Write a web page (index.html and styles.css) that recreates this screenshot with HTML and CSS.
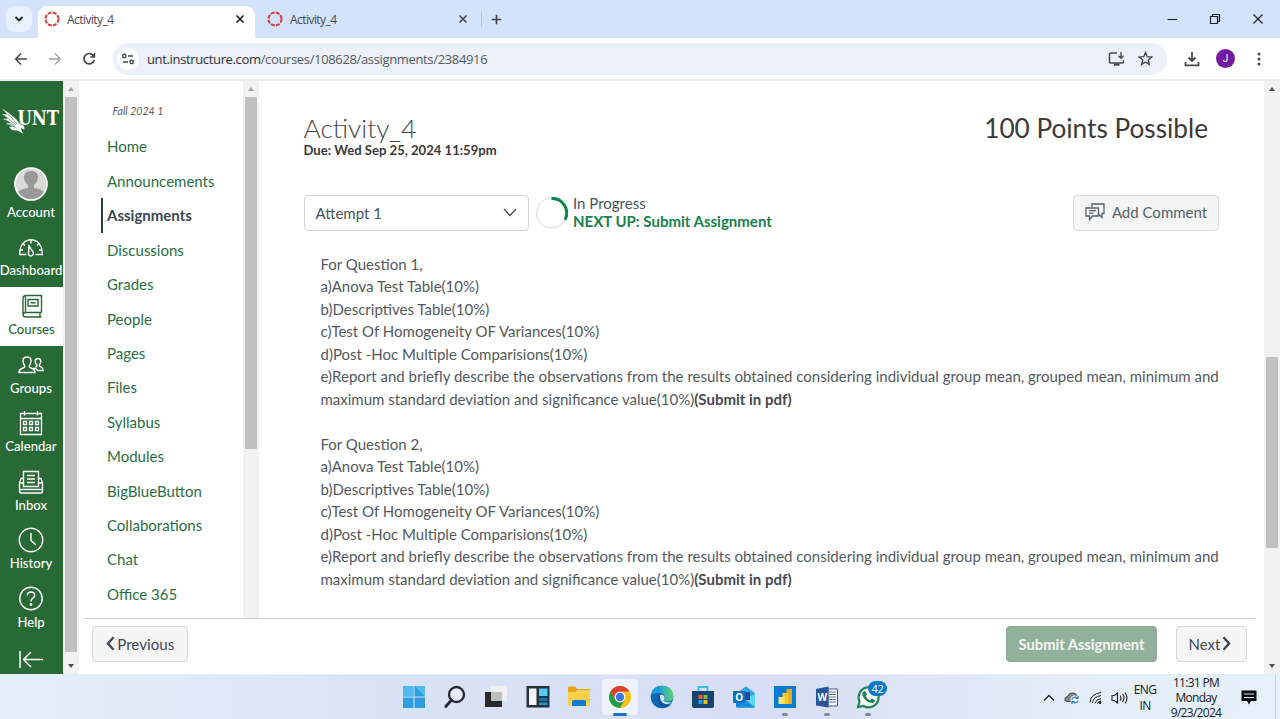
FILE: index.html
```
<!DOCTYPE html>
<html lang="en">
<head>
<meta charset="utf-8">
<title>Activity_4</title>
<link rel="stylesheet" href="styles.css">
</head>
<body>
<header class="tabs">
  <div class="tab-search"><svg width="10" height="8" viewBox="0 0 10 8" class="ln dark"><path d="M1.5 2l3.5 3.5L8.500 2" stroke-width="1.8"/></svg></div>
  <div class="tab active">
    <svg class="fav" width="16" height="16" viewBox="0 0 16 16"><circle cx="8" cy="8" r="6.500"/></svg>
    <span class="tab-title">Activity_4</span>
    <svg width="10" height="10" viewBox="0 0 10 10" class="ln dark"><path d="M1.500 1.500l7 7M8.500 1.500l-7 7" stroke-width="1.700"/></svg>
  </div>
  <div class="tab">
    <svg class="fav" width="16" height="16" viewBox="0 0 16 16"><circle cx="8" cy="8" r="6.500"/></svg>
    <span class="tab-title">Activity_4</span>
    <svg width="10" height="10" viewBox="0 0 10 10" class="ln gray"><path d="M1.500 1.500l7 7M8.500 1.500l-7 7" stroke-width="1.600"/></svg>
  </div>
  <i class="tab-sep"></i>
  <svg width="11" height="11" viewBox="0 0 11 11" class="ln gray plus"><path d="M5.500 .8v9.400M.8 5.500h9.400" stroke-width="1.700"/></svg>
  <div class="window-buttons">
    <svg width="12" height="12" viewBox="0 0 12 12" class="ln dark"><path d="M1.500 6.500h9.500" stroke-width="1.100"/></svg>
    <svg width="12" height="12" viewBox="0 0 12 12" class="ln dark"><path d="M1.500 3.500h7v7h-7zM3.500 3.500v-2h7v7h-2" stroke-width="1.200"/></svg>
    <svg width="12" height="12" viewBox="0 0 12 12" class="ln dark"><path d="M1.500 1.500l9 9M10.500 1.500l-9 9" stroke-width="1.200"/></svg>
  </div>
</header>
<section class="toolbar">
  <svg width="14" height="14" viewBox="0 0 14 14" class="ln gray"><path d="M13 7H2M7 1.500L1.700 7 7 12.500" stroke-width="1.600"/></svg>
  <svg width="14" height="14" viewBox="0 0 14 14" class="ln pale"><path d="M1 7h11M7 1.500L12.300 7 7 12.500" stroke-width="1.500"/></svg>
  <svg width="14" height="14" viewBox="0 0 14 14" class="ln gray"><path d="M11.700 4.200A5.200 5.200 0 1 0 12.200 8M12.400 1v4h-4" stroke-width="1.700"/></svg>
  <div class="address">
    <span class="site"><svg width="14" height="12" viewBox="0 0 14 12" class="ln gray"><circle cx="3.300" cy="3" r="1.700"/><path d="M7 3h5M2 9h5" /><circle cx="10.700" cy="9" r="1.700"/></svg></span>
    <span class="url"><b>unt.instructure.com</b>/courses/108628/assignments/2384916</span>
    <svg width="17" height="16" viewBox="0 0 17 16" class="ln gray"><path d="M9 2H2.500Q1.500 2 1.500 3v8q0 1 1 1h12q1 0 1-1V9.500" stroke-width="1.500"/><path d="M6 13.600h5.500" stroke-width="2.200"/><path d="M13 1v6M10.500 4.800L13 7.300l2.500-2.500" stroke-width="1.400"/></svg>
    <svg width="15" height="15" viewBox="0 0 15 15" class="ln gray"><path d="M7.500 1.500l1.700 4.200 4.500.4-3.400 2.900 1 4.400-3.800-2.400-3.800 2.400 1-4.400L1.300 6.100l4.500-.4z" stroke-width="1.400"/></svg>
  </div>
  <svg width="16" height="16" viewBox="0 0 16 16" class="ln gray"><path d="M8 1v9M4.500 6.500L8 10l3.500-3.500M1.500 11v3.300h13V11" stroke-width="1.800"/></svg>
  <span class="profile">J</span>
  <svg width="4" height="14" viewBox="0 0 4 14" class="dots"><circle cx="2" cy="2" r="1.500"/><circle cx="2" cy="7" r="1.500"/><circle cx="2" cy="12" r="1.500"/></svg>
</section>

<main class="page">
  <nav class="global">
    <svg class="logo" width="62" height="28" viewBox="0 0 62 28">
      <path d="M2 1.500Q10 6 16 12L18.500 15.500 24 18.500 24.500 22.500 20.500 21 23 26.500 17 23.500 12 23 9 20 13 19.500 6 16.500 10.500 15.500 3 12 8 11.500 2 7 7 7.500z" fill="#fff"/>
      <path d="M4 4Q11 9 17 17M4 8l12 10M5 12.500l10 6.500M8 16.500l8 4" stroke="#276a36" stroke-width=".6" fill="none"/>
      <text x="17.500" y="18" textLength="41.500" lengthAdjust="spacingAndGlyphs">UNT</text>
    </svg>
    <a class="g account"><svg width="34" height="34" viewBox="0 0 34 34"><circle cx="17" cy="17" r="16" fill="#d9dbd9"/><path d="M3 26Q7 21.500 14 21V18Q9.800 15 10 9.800 10.500 4 17 4t7 5.800Q24 15 20 18v3q7 .5 11 5Q25 32.500 17 32.500T3 26z" fill="#999"/><circle cx="17" cy="17" r="16" fill="none" stroke="#fff" stroke-width="1.700"/></svg><span>Account</span></a>
    <a class="g"><svg width="26" height="26" viewBox="0 0 26 26" class="ln"><path d="M8.500 20.500H1.800q-.3-9 5.200-13 6-3.500 12 0 5.500 4 5.200 13H17.500M13 5.500v4M5 9.500l2 2M21 9.500l-2 2M2.500 16h2.500M21 16h2.500M11 12l4 6a2.500 2.500 0 1 1-4.500 1z"/></svg><span>Dashboard</span></a>
    <a class="g current"><svg width="26" height="26" viewBox="0 0 26 26" class="ln"><path d="M22.500 19.500V2.500H7Q4 2.500 4 5.500v16q0 2.500 3 2.500h15.500M22.500 19.500H7q-3 0-3 2.200 0 2.200 3 2.200M21 19.500v4.500M6.500 3v16.500M9 6.500h10v6.500H9zM11.500 9.700h5" stroke-width="1.400"/></svg><span>Courses</span></a>
    <a class="g"><svg width="26" height="26" viewBox="0 0 26 26" class="ln"><path d="M1 20.500q0-3 3-4 3.500-1 2.500-3Q5 11.500 5 8.500 5.300 5 9 5t4 3.500Q13 11.500 11.500 13.500q-1 2 2.500 3 3 1 3 4zM17.500 15q2-.5 1.300-2Q17 11 17.200 9 17.500 6.500 20 6.500T22.800 9Q23 11 21.500 13q-.7 1.500 1.500 2 2.200 1 2.200 3.500h-5.500Q18.500 16.500 15.500 16"/></svg><span>Groups</span></a>
    <a class="g"><svg width="26" height="26" viewBox="0 0 26 26" class="ln"><path d="M2.500 3.500h21v21h-21zM2.500 8.500h21M6.500 1v4.500M19.500 1v4.500M5.500 11.500h3v3h-3zM11.500 11.500h3v3h-3zM17.500 11.500h3v3h-3zM5.500 17.500h3v3h-3zM11.500 17.500h3v3h-3zM17.500 17.500h3v3h-3z" stroke-width="1.300"/></svg><span>Calendar</span></a>
    <a class="g"><svg width="26" height="26" viewBox="0 0 26 26" class="ln"><path d="M5.500 14V2.500h15V14M5.500 9.500H3L1.500 14v8q0 2 2 2h19q2 0 2-2v-8L23 9.500h-2.500M1.500 14h4v3.500h15V14h4M1.500 20.500h23M9 6.500h8M9 10h8M9 13.500h8" stroke-width="1.400"/></svg><span>Inbox</span></a>
    <a class="g"><svg width="26" height="26" viewBox="0 0 26 26" class="ln"><circle cx="13" cy="13" r="11.700"/><path d="M13 6v7.500l5 4.500"/></svg><span>History</span></a>
    <a class="g"><svg width="26" height="26" viewBox="0 0 26 26" class="ln"><circle cx="13" cy="12.500" r="11.200"/><path d="M9.300 9.500Q9.500 6 13 6q3.700 0 3.700 3.300 0 1.800-2 3Q13 13.300 13 15.500"/><circle cx="13" cy="18.500" r=".7"/></svg><span>Help</span></a>
    <a class="g"><svg class="collapse" width="26" height="22" viewBox="0 0 26 22"><path d="M2 2v17M25 10.500H6M13 3l-7.500 7.500L13 18"/></svg></a>
  </nav>
  <div class="scroll nav-scroll"><i class="up muted"></i><b></b><i class="down"></i></div>
  <div class="workspace">
    <div class="upper">
      <nav class="course">
        <em>Fall 2024 1</em>
        <a>Home</a><a>Announcements</a><a class="selected">Assignments</a><a>Discussions</a><a>Grades</a><a>People</a><a>Pages</a><a>Files</a><a>Syllabus</a><a>Modules</a><a>BigBlueButton</a><a>Collaborations</a><a>Chat</a><a>Office 365</a>
      </nav>
      <div class="scroll course-scroll"><i class="up muted"></i><b></b></div>
      <article class="assignment">
        <div class="heading">
          <div><h1>Activity_4</h1><p class="due">Due: Wed Sep 25, 2024 11:59pm</p></div>
          <div class="points">100 Points Possible</div>
        </div>
        <div class="status">
          <div class="select"><span>Attempt 1</span><svg width="14" height="9" viewBox="0 0 14 9" class="ln gray"><path d="M1 1l6 6.500L13 1" stroke-width="1.200"/></svg></div>
          <svg class="ring" width="32" height="32" viewBox="0 0 32 32"><circle cx="15.500" cy="16" r="15" fill="none" stroke="#d5d9dc"/><path d="M15.500 1.500A14.500 14.500 0 0 1 29 22.800" fill="none" stroke="#0b874b" stroke-width="3"/></svg>
          <div class="progress"><span>In Progress</span><strong>NEXT UP: Submit Assignment</strong></div>
          <button class="btn comment"><svg width="20" height="20" viewBox="0 0 20 20" class="ln"><path d="M7 5V2h12v9.500h-2v4l-3-3M1 6h12.500v8H7.500L4.500 17.800V14H1zM4 8.700h7M4 11.200h4.500" stroke-width="1.300"/></svg><span>Add Comment</span></button>
        </div>
        <div class="body">
          <p>For Question 1,<br>a)Anova Test Table(10%)<br>b)Descriptives Table(10%)<br>c)Test Of Homogeneity OF Variances(10%)<br>d)Post -Hoc Multiple Comparisions(10%)<br>e)Report and briefly describe the observations from the results obtained considering individual group mean, grouped mean, minimum and<br>maximum standard deviation and significance value(10%)<strong>(Submit in pdf)</strong></p>
          <p>For Question 2,<br>a)Anova Test Table(10%)<br>b)Descriptives Table(10%)<br>c)Test Of Homogeneity OF Variances(10%)<br>d)Post -Hoc Multiple Comparisions(10%)<br>e)Report and briefly describe the observations from the results obtained considering individual group mean, grouped mean, minimum and<br>maximum standard deviation and significance value(10%)<strong>(Submit in pdf)</strong></p>
        </div>
      </article>
    </div>
    <footer class="actions">
      <button class="btn prev"><svg width="9" height="15" viewBox="0 0 9 15" class="ln"><path d="M7.500 1.200L2 7.500l5.500 6.300" stroke-width="2.400"/></svg><span>Previous</span></button>
      <button class="btn submit"><span>Submit Assignment</span></button>
      <button class="btn next"><span>Next</span><svg width="9" height="15" viewBox="0 0 9 15" class="ln"><path d="M1.500 1.200L7 7.500l-5.500 6.300" stroke-width="2.400"/></svg></button>
    </footer>
  </div>
  <div class="scroll page-scroll"><i class="up"></i><b></b><i class="down"></i></div>
</main>

<section class="taskbar">
  <div class="apps">
    <span class="app"><svg width="24" height="24" viewBox="0 0 24 24"><path d="M1 1h10.500v10.500H1zM12.500 1H23v10.500H12.500zM1 12.500h10.500V23H1zM12.500 12.500H23V23H12.500z" fill="#2f9de2"/><path d="M1 1h10.500v10.500H1zM12.500 1H23v10.500z" fill="#53b9ee"/></svg></span>
    <span class="app"><svg width="24" height="24" viewBox="0 0 24 24" fill="none" stroke="#252a31"><circle cx="13.500" cy="9.500" r="7.500" stroke-width="2.300" fill="#e8edf8"/><path d="M8.500 15L2.800 21.500" stroke-width="2.800" stroke-linecap="round"/></svg></span>
    <span class="app"><svg width="24" height="24" viewBox="0 0 24 24"><path d="M1 7h17v15H1z" fill="#292929"/><path d="M7 1h16v15H7z" fill="#f2f2ee" opacity=".88"/><path d="M7 7h11v9H7z" fill="#bebfc0"/></svg></span>
    <span class="app"><svg width="24" height="24" viewBox="0 0 24 24"><path d="M.5 1h23v21.500H.5z" fill="#263039"/><path d="M3 3.500h7.500V20H3z" fill="#f2f2f2"/><path d="M13 3.500h8.500V11H13z" fill="#52c8f4"/><path d="M13 13h8.500v3H13z" fill="#0878bd"/><path d="M13 17.500h8.500V20H13z" fill="#2098dc"/></svg></span>
    <span class="app"><svg width="24" height="24" viewBox="0 0 24 24"><path d="M1 2.500q0-1 1-1h6l2.500 2.500H22q1 0 1 1V20q0 1-1 1H1z" fill="#e7a516"/><path d="M1 7h7l2-2h12q1 0 1 1v14q0 1-1 1H1z" fill="#ffd04b"/><path d="M5 21v-4.500q0-1.500 1.500-1.500h11q1.500 0 1.500 1.500V21z" fill="#0b7dcc"/></svg></span>
    <span class="app open"><svg width="24" height="24" viewBox="0 0 24 24"><circle cx="12" cy="12" r="11" fill="#fbc116"/><path d="M2.500 6.500A11 11 0 0 1 21.500 6.500H12A5.500 5.500 0 0 0 7.200 14.700z" fill="#df3f31"/><path d="M2.500 6.500A11 11 0 0 0 12 23L16.700 14.700A5.500 5.500 0 0 1 7.200 14.700z" fill="#1f9e51"/><circle cx="12" cy="12" r="5.300" fill="#fff"/><circle cx="12" cy="12" r="4.200" fill="#3878e8"/></svg><i></i></span>
    <span class="app"><svg width="24" height="24" viewBox="0 0 24 24"><defs><linearGradient id="eg"><stop offset=".3" stop-color="#189be0"/><stop offset="1" stop-color="#64d36d"/></linearGradient></defs><circle cx="12" cy="12" r="11.300" fill="#0c67b5"/><path d="M.8 10Q3 .7 12 .7q10.500 0 11.300 10.300 0 5-5 5.500h-4q-1.500-.8 0-2 1.500-6-4.300-6.500Q5 7.500.8 10z" fill="url(#eg)"/><path d="M10 9.500q-5 5-.5 10 5 5 11.500.5-8 1.500-11-4-1.300-3.500 0-6.500z" fill="#164f98"/><path d="M10 10q4-1 4.500 2.500-.2 2.300-1 3.200 1.500 2.500 8.500 1.200-3 3-8 1.500Q9.500 16.500 10 10z" fill="#d6e0f6"/></svg></span>
    <span class="app"><svg width="24" height="24" viewBox="0 0 24 24"><path d="M7.500 6V2h9v4" fill="none" stroke="#35baf0" stroke-width="1.800"/><path d="M1 6h22v15q0 2-2 2H3q-2 0-2-2z" fill="#17436f"/><path d="M7.500 10h4v4h-4z" fill="#f05a2a"/><path d="M12.500 10h4v4h-4z" fill="#80bd35"/><path d="M7.500 15h4v4h-4z" fill="#16a2e5"/><path d="M12.500 15h4v4h-4z" fill="#fbbd18"/></svg></span>
    <span class="app"><svg width="24" height="24" viewBox="0 0 24 24"><path d="M4 9l10-7.500L23 9v12q0 1.500-1.500 1.500H5Q4 22.500 4 21z" fill="#1384d5"/><path d="M14 1.500L23 8l-9 6-8-6z" fill="#36a7e7"/><path d="M23 9v13L9 15z" fill="#61d4f4"/><path d="M23 22.500H5L14 15z" fill="#1490df"/><path d="M10 7h8v8h-8z" fill="#194d91"/><rect x="1" y="6" width="12.500" height="12" rx="1" fill="#0871c6"/><text x="3.200" y="15.500" class="glyph">O</text></svg></span>
    <span class="app run"><svg width="24" height="24" viewBox="0 0 24 24"><path d="M1 1h22v22H1z" fill="#087bd3"/><path d="M13.500 4H19v15h-5.500z" fill="#e9ab20"/><path d="M9.500 8h6v11h-6z" fill="#f5c72b"/><path d="M5.500 12h6v7h-6z" fill="#ffe277"/></svg><i></i></span>
    <span class="app run"><svg width="24" height="24" viewBox="0 0 24 24"><path d="M13 4h9.500v17H13z" fill="#fff" stroke="#36588e"/><path d="M14 7h7M14 9.500h7M14 12h7M14 14.500h7M14 17h7" stroke="#55749d"/><path d="M1 4l12.500-2.500v21L1 20.500z" fill="#28569b"/><text x="2.500" y="15.500" class="glyph">W</text></svg><i></i></span>
    <span class="app run"><svg width="24" height="24" viewBox="0 0 24 24"><path d="M2 22l1.500-5.500A10 10 0 1 1 7.500 21z" fill="#f3fbf4" stroke="#218456" stroke-width="2.200"/><path d="M7.500 6.500L9 6l2 3.500-1.300 1.700q1.500 3 4.500 4l1.500-1.700 3.500 1.800q-.5 3-3.500 2.700-7.500-1.500-9.500-8.500-.2-2 1.300-3z" fill="#218456"/></svg><i></i><b class="badge">42</b></span>
  </div>
  <div class="tray">
    <svg width="12" height="8" viewBox="0 0 12 8" class="ln dark"><path d="M1 6.500l5-5 5 5" stroke-width="1.300"/></svg>
    <svg width="16" height="14" viewBox="0 0 16 14"><path d="M3 10.500Q0 10 1 7.500 1.700 5.500 3.500 5.500 5 1.500 8.500 2q3.500-.3 5 3.500H9v5z" fill="#888" stroke="#444"/><circle cx="11" cy="9" r="4.500" fill="#eef5fc"/><path d="M7.800 8.500q2.500-4 5.500-1M14 5v2.500h-2.500M14.300 9.500q-2.500 4-5.500 1M8 13v-2.500h2.500" fill="none" stroke="#1879c8" stroke-width="1.200"/></svg>
    <svg width="13" height="13" viewBox="0 0 13 13" class="ln dark"><path d="M1 11.500Q1.500 3 12 1.500M3.500 12Q4 6 12 4.500M6 12.300Q7 8.500 12 7.500M8.500 12.500q.5-2 3.500-2.500" stroke-width="1"/><circle cx="11" cy="11.500" r=".8"/></svg>
    <svg width="17" height="14" viewBox="0 0 17 14" class="ln dark"><path d="M1 4.500h2.500L6.500 2v10L3.500 9.500H1zM9 4.500q2 2.500 0 5M11.500 3q3 4 0 8M14 1.500q4 5.500 0 11" stroke-width="1.100"/></svg>
    <span class="lang">ENG<br>IN</span>
    <span class="clock">11:31 PM<br>Monday<br>9/23/2024</span>
    <svg width="16" height="15" viewBox="0 0 16 15"><path d="M.5.500h15V11H10l-2 3.500L6 11H.5z" fill="#080b10"/><path d="M3 4h10M3 7.500h10" stroke="#dfe9f5" stroke-width="1.200"/></svg>
    <i class="peek"></i>
  </div>
</section>
</body>
</html>
```
FILE: styles.css
```
* { box-sizing: border-box; }
body { margin: 0; width: 1280px; height: 719px; overflow: hidden; display: flex; flex-direction: column; font-family: Lato, "Liberation Sans", sans-serif; color: #2d3b45; background: #fff; }
svg { flex: none; display: block; }
p, h1 { margin: 0; }
.ln { fill: none; stroke: currentColor; stroke-width: 1.4; }
.dark { color: #202124; }
.gray { color: #44484c; }
.pale { color: #a0a3a7; }

.tabs { height: 38px; flex: none; background: #d3e2fd; display: flex; align-items: center; padding-left: 6px; font: 12px "Open Sans", sans-serif; }
.tab-search { width: 26px; height: 26px; border-radius: 9px; background: #e9f0fe; display: grid; place-items: center; margin-right: 6px; }
.tab { height: 32px; width: 217px; display: flex; align-items: center; padding: 0 10px 0 6px; color: #45484c; }
.tab.active { background: #fff; border-radius: 9px 9px 0 0; align-self: flex-end; padding-bottom: 6px; margin-right: 6px; }
.tab-title { flex: 1; margin-left: 7px; letter-spacing: -.55px; }
.fav circle { fill: none; stroke: #d4403a; stroke-width: 2.1; stroke-dasharray: 3.9 1.2; }
.tab-sep { width: 1px; height: 15px; background: #a9c7f8; margin-left: 3px; }
.plus { margin-left: 9px; }
.window-buttons { margin-left: auto; display: flex; gap: 31px; padding-right: 16px; }

.toolbar { height: 43px; flex: none; display: flex; align-items: center; padding: 0 19px 0 14px; gap: 20px; border-bottom: 2px solid #ececee; background: #fff; }
.address { flex: 1; height: 32px; border-radius: 16px; background: #ebf0f9; display: flex; align-items: center; padding: 0 14px 0 4px; gap: 13px; margin-left: -3px; margin-right: -3px; }
.site { width: 22px; height: 22px; border-radius: 50%; background: #fff; display: grid; place-items: center; }
.url { flex: 1; margin-left: -5px; font: 13px "Open Sans", sans-serif; color: #555a60; letter-spacing: -.35px; }
.url b { font-weight: 400; color: #303236; }
.profile { width: 19px; height: 19px; border-radius: 50%; background: #741aa0; color: #fff; font: 10px/19px Roboto, sans-serif; text-align: center; margin-left: -4px; margin-right: 2px; }
.dots { fill: #44484c; }

.page { height: 593px; flex: none; display: flex; }
.global { width: 63px; background: #276a36; color: #fff; overflow: hidden; display: flex; flex-direction: column; flex: none; }
.logo { margin: 26px 0 23.9px; }
.logo text { font: bold 19.5px "DejaVu Serif", serif; fill: #fff; stroke: #276a36; stroke-width: 1.5px; paint-order: stroke; }
.g { height: 58.6px; flex: none; display: flex; flex-direction: column; align-items: center; width: 62px; font-size: 13.1px; line-height: 18px; font-weight: 500; padding-top: 5.500px; gap: 1px; }
.g.account { height: 70px; padding-top: 8px; gap: 2px; }
.g.current { background: #fff; color: #276a36; width: 63px; }
.collapse { fill: none; stroke: #fff; stroke-width: 1.5; margin-top: 4px; }

.scroll { width: 16px; background: #f1f1f1; flex: none; display: flex; flex-direction: column; align-items: center; }
.scroll b { width: 12px; background: #c1c1c1; }
.scroll i { height: 16px; width: 16px; display: grid; place-items: center; }
.scroll i::before { content: ""; border: 3.500px solid transparent; }
.up::before { border-top: 0 !important; border-bottom: 4px solid #505050 !important; }
.down::before { border-bottom: 0 !important; border-top: 4px solid #505050 !important; }
.up.muted::before { border-bottom-color: #a3a3a3 !important; }
.nav-scroll b { height: 555px; }
.nav-scroll .down { margin-top: auto; }
.course-scroll b { height: 352px; }
.page-scroll b { height: 191px; margin-top: 260px; }
.page-scroll .down { margin-top: auto; }

.workspace { flex: 1; display: flex; flex-direction: column; min-width: 0; }
.upper { height: 537px; display: flex; overflow: hidden; }
.course { width: 164px; flex: none; padding: 21.600px 0 0 22px; color: #287044; font-size: 15px; }
.course em { display: block; font-size: 10.600px; line-height: 16px; color: #5a6066; margin: 0 0 10.800px 11.500px; }
.course a { display: block; height: 34.430px; line-height: 34.430px; padding-left: 4px; border-left: 2px solid transparent; white-space: nowrap; }
.course .selected { font-weight: 700; color: #3a4650; border-color: #2d3b45; }

.assignment { flex: 1; padding: 31px 0 0 44.500px; }
.heading { display: flex; justify-content: space-between; height: 83px; padding-right: 56px; }
.heading h1 { font-size: 26.300px; line-height: 32px; font-weight: 300; color: #444; }
.due { font-size: 13.100px; line-height: 16px; font-weight: 700; margin-top: -2px; color: #3a3a3a; }
.points { font-size: 26.200px; line-height: 33px; color: #3a3a3a; }
.status { display: flex; align-items: center; height: 35px; padding-right: 45px; }
.select { width: 225px; height: 36px; border: 1px solid #cfd3d6; border-radius: 4px; display: flex; align-items: center; justify-content: space-between; padding: 0 11px; font-size: 15px; color: #48535b; }
.ring { margin-left: 7.500px; }
.progress { margin-left: 5px; display: flex; flex-direction: column; font-size: 15px; line-height: 18px; color: #48535b; margin-top: -1px; }
.progress strong { color: #178249; }
.btn { height: 36px; border: 1px solid #d7dade; border-radius: 4px; background: #f5f5f5; display: flex; align-items: center; justify-content: center; font: 15px Lato, sans-serif; color: #3d4952; padding: 0 0 1px; white-space: nowrap; flex: none; }
.comment { width: 146px; margin-left: auto; gap: 7px; color: #56616a; }
.body { padding: 23px 0 0 17px; font-size: 15px; line-height: 22.470px; color: #54595d; white-space: nowrap; }
.body p { margin-bottom: 22.470px; }
.body strong { color: #454a4e; }

.actions { height: 56px; margin: 0 9px 0 5px; border-top: 1px solid #c7cacd; display: flex; padding: 7px 8px; }
.prev { width: 96px; gap: 2.500px; font-size: 15.200px; }
.submit { width: 151px; margin-left: auto; background: #92b19b; border-color: #8aa994; color: #f3f8f4; font-weight: 700; font-size: 14.700px; }
.next { width: 71px; margin-left: 19px; gap: 2px; padding-right: 3px; }

.taskbar { flex: 1; background: linear-gradient(90deg, #e5eff8, #d9e3f7 30%, #d7def5 60%, #e4eef8 85%, #e7f1f9); display: flex; justify-content: flex-end; border-top: 1px solid #e8edf4; }
.apps { display: flex; gap: 5.300px; margin-right: 157px; padding-top: 3.500px; }
.app { width: 36px; height: 36px; display: grid; place-items: center; position: relative; }
.app.open { background: #eef2fc; border-radius: 4px; }
.app > i { position: absolute; bottom: -1px; left: 15px; width: 6px; height: 3px; border-radius: 2px; background: #85898f; }
.app.open > i { left: 11px; width: 14px; background: #1976c5; }
.badge { position: absolute; left: 18px; top: 2px; width: 19px; height: 15px; border-radius: 8px; background: #0879c9; color: #fff; font: 11px/15px "Open Sans", sans-serif; letter-spacing: -.3px; text-align: center; }
.glyph { font: bold 10px "Open Sans", sans-serif; fill: #fff; }
.tray { display: flex; align-items: center; width: 237px; font: 12px/16px "Open Sans", sans-serif; color: #15181c; text-align: center; padding-bottom: 1px; }
.tray svg + svg { margin-left: 9px; }
.lang { width: 24px; margin-left: 5px; letter-spacing: -.7px; }
.clock { width: 56px; margin-left: 11px; line-height: 15px; letter-spacing: -.7px; white-space: nowrap; }
.clock + svg { margin-left: 17px; }
.peek { width: 1px; height: 45px; background: #c5d3df; margin-left: auto; margin-right: 4px; }
```
